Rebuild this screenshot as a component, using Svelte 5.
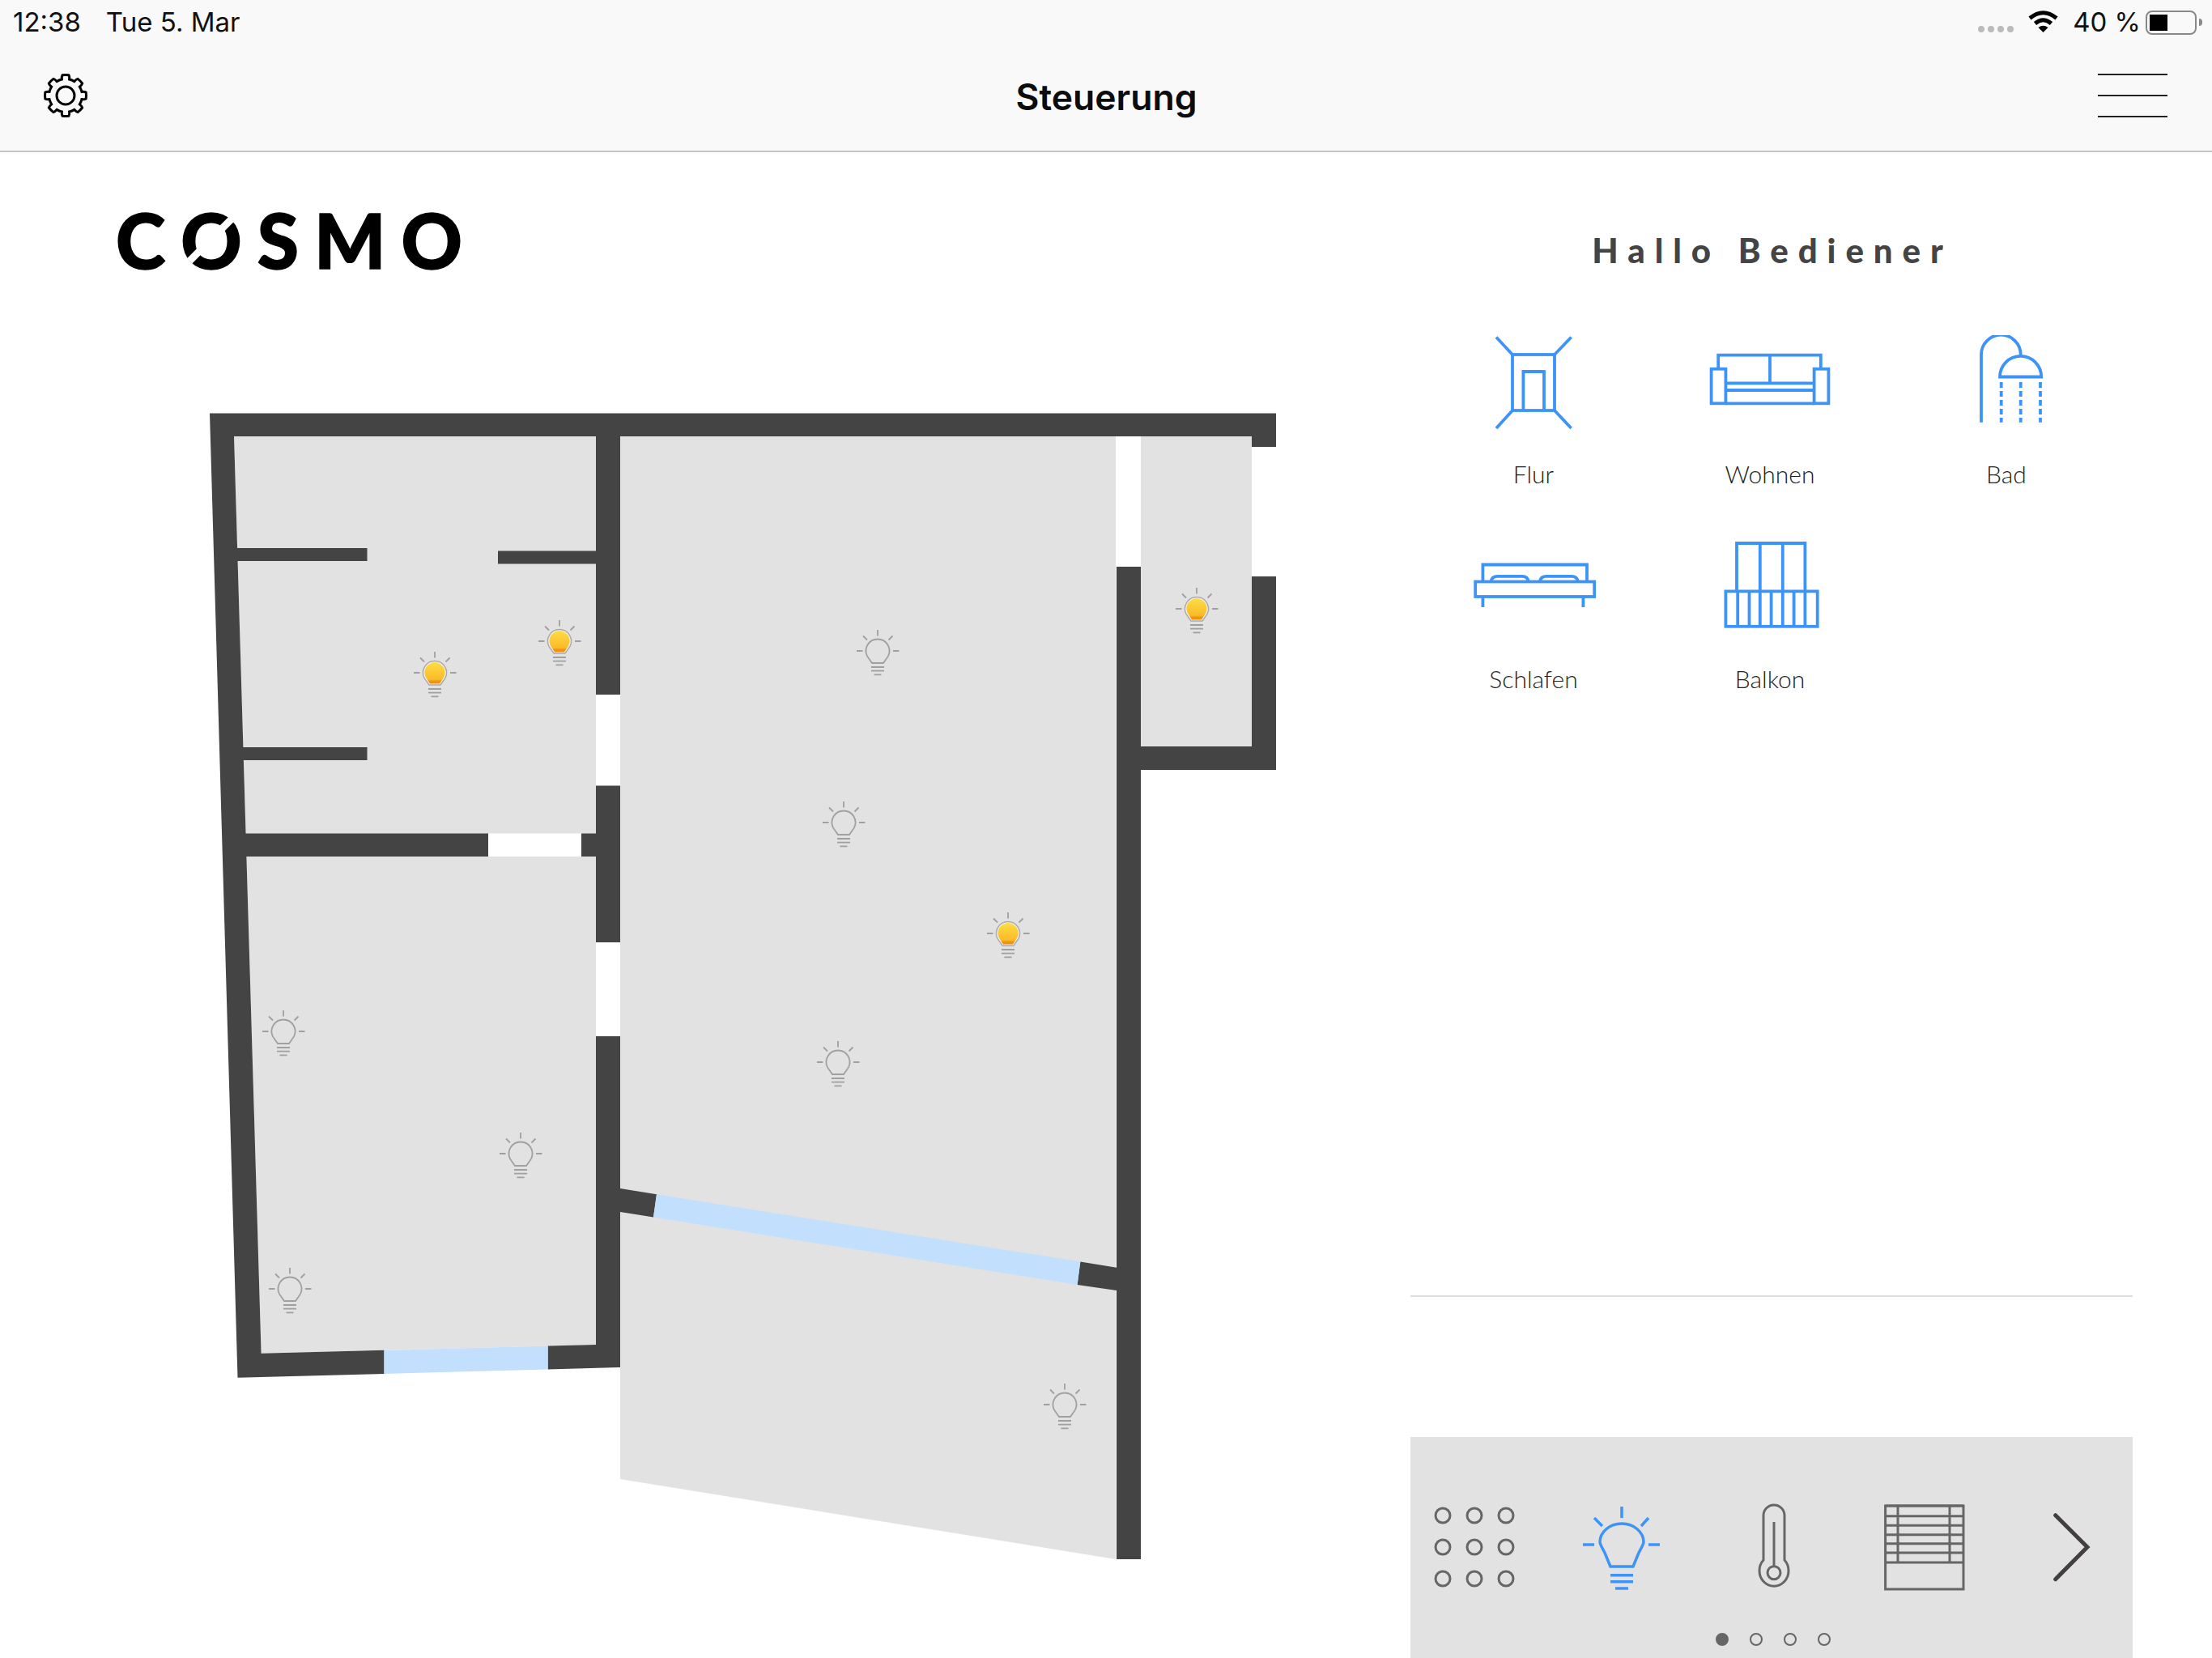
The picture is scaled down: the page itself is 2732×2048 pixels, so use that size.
<script>
	const lights = [
		{ x: 537, y: 831, on: true },
		{ x: 691, y: 792, on: true },
		{ x: 1478, y: 752, on: true },
		{ x: 1245, y: 1153, on: true },
		{ x: 1084, y: 804, on: false },
		{ x: 1042, y: 1016, on: false },
		{ x: 1035, y: 1312, on: false },
		{ x: 350, y: 1274, on: false },
		{ x: 643, y: 1425, on: false },
		{ x: 358, y: 1592, on: false },
		{ x: 1315, y: 1735, on: false }
	];

	const pt = (r, deg) => {
		const a = ((deg - 90) * Math.PI) / 180;
		return `${(r * Math.cos(a)).toFixed(2)} ${(r * Math.sin(a)).toFixed(2)}`;
	};

	// eight rounded teeth
	let gearPath = '';
	for (let i = 0; i < 8; i++) {
		const a = i * 45;
		gearPath += `${i === 0 ? 'M' : 'A20.5 20.5 0 0 1'} ${pt(20.5, a - 13)} `;
		gearPath += `Q${pt(24, a - 12)} ${pt(25.5, a - 9)} A26.5 26.5 0 0 1 ${pt(25.5, a + 9)} Q${pt(24, a + 12)} ${pt(20.5, a + 13)} `;
	}
	gearPath += 'A20.5 20.5 0 0 1 ' + pt(20.5, -13) + ' Z';

	const rooms = [
		{ name: 'Flur', icon: 'flur' },
		{ name: 'Wohnen', icon: 'wohnen' },
		{ name: 'Bad', icon: 'bad' },
		{ name: 'Schlafen', icon: 'schlafen' },
		{ name: 'Balkon', icon: 'balkon' }
	];

	const grid = [1782, 1821, 1860];
	const gridY = [1872, 1911, 1950];
	const slats = [1860, 1872.7, 1884.3, 1895.7, 1906.7, 1918, 1930];
</script>

{#snippet bulbRays()}
	<path d="M-26 0H-18.5M19 0H26.5M0 -26V-18.5M-18 -18.5L-13 -13.5M18.5 -18.5L13.5 -13.5" />
	<path d="M-8 20H8M-8 24.6H8M-4.5 29.3H4.5" />
{/snippet}

<div class="page">
	<header>
		<div class="status">
			<div class="clock"><span>12:38</span><span>Tue 5. Mar</span></div>
			<div class="system">
				<div class="signal"><i></i><i></i><i></i><i></i></div>
				<svg class="wifi" viewBox="0 0 37 27" width="37" height="27">
					<path d="M2 9.5Q18.5 -4 35 9.5" />
					<path d="M8.5 16Q18.5 7.5 28.5 16" />
					<path class="wifi-dot" d="M12.5 21Q18.5 16.5 24.5 21L18.5 27Z" />
				</svg>
				<span class="percent">40 %</span>
				<div class="battery"><div class="charge"></div></div>
				<div class="nub"></div>
			</div>
		</div>
		<nav>
			<svg class="gear" viewBox="-29 -29 58 58" width="58" height="58">
				<path d={gearPath} />
				<circle r="11" />
			</svg>
			<h1>Steuerung</h1>
			<div class="menu"><i></i><i></i><i></i></div>
		</nav>
	</header>

	<main>
		<section class="plan">
			<div class="logo">C<span class="slashed">O<i></i></span>SMO</div>
			<svg class="floor" viewBox="258 510 1320 1418" width="1320" height="1418">
				<defs>
					<linearGradient id="glow" x1="0" y1="0" x2="0" y2="1">
						<stop offset="0" stop-color="#fedd45" />
						<stop offset="0.8" stop-color="#fabb28" />
						<stop offset="0.88" stop-color="#f09510" />
						<stop offset="1" stop-color="#ee9010" />
					</linearGradient>
				</defs>

				<!-- rooms -->
				<g fill="#e2e2e2">
					<polygon points="289,539 736,539 736,1661 322.6,1671.7" />
					<polygon points="766,539 1378,539 1378,1926 766,1827" />
					<rect x="1409" y="539" width="137" height="383" />
				</g>

				<!-- walls -->
				<g fill="#444">
					<polygon points="259,510.5 1576,510.5 1576,552 1546,552 1546,539 289,539 322.6,1671.7 474.5,1667.8 474.5,1696.9 293.5,1701.7" />
					<polygon points="676.6,1662.6 736,1661 736,970.5 766,970.5 766,1689 676.6,1691.4" />
					<rect x="736" y="539" width="30" height="319" />
					<polygon points="292,677 453.5,677 453.5,693 293,693" />
					<rect x="615" y="680.5" width="121" height="16" />
					<polygon points="299,923 453.5,923 453.5,939 300,939" />
					<polygon points="302,1029.5 603,1029.5 603,1058 304,1058" />
					<rect x="718" y="1029.5" width="18" height="28.5" />
					<polygon points="766,1468 811,1475.2 807,1503.5 766,1497" />
					<polygon points="1334.3,1558.6 1379,1565.7 1379,1594 1330.6,1587" />
					<rect x="1379" y="700" width="30" height="1226" />
					<rect x="1546" y="712" width="30" height="239" />
					<rect x="1409" y="922" width="137" height="29" />
				</g>

				<!-- door gaps -->
				<rect x="603" y="1029.5" width="115" height="28.5" fill="#fff" />
				<rect x="736" y="1164" width="30" height="116" fill="#fff" />

				<!-- windows -->
				<g fill="#c2e0fe">
					<polygon points="474.5,1667.8 676.6,1662.6 676.6,1691.4 474.5,1696.9" />
					<polygon points="811,1475.2 1334.3,1558.6 1330.6,1587 807,1503.5" />
				</g>

				{#each lights as light}
					<g class="light" class:on={light.on} transform="translate({light.x} {light.y})">
						{@render bulbRays()}
						{#if light.on}
							<path class="shell" d="M-7 15H7L13 6.4A14.5 14.5 0 1 0 -13 6.4Z" />
							<path class="core" d="M-6 13.5H6L11.2 5.4A12.6 12.6 0 1 0 -11.2 5.4Z" />
						{:else}
							<path d="M-7 15H7L13 6.4A14.5 14.5 0 1 0 -13 6.4Z" />
						{/if}
					</g>
				{/each}
			</svg>
		</section>

		<aside>
			<h2>Hallo Bediener</h2>
			<div class="rooms">
				{#each rooms as room}
					<div class="room">
						<svg viewBox="-80 0 160 120" width="160" height="120">
							{#if room.icon === 'flur'}
								<rect x="-26" y="24" width="52" height="69" />
								<path d="M-12.6 93V45H13V93M-46 2.5L-26 24M46.6 2.5L26 24M-46 115L-26 93M46.6 115L26 93" />
							{:else if room.icon === 'wohnen'}
								<path d="M-63.8 41.7V24.7H62.8V41.7M0 24.7V57.9M-54.6 59.4H54.6M-54.6 68H54.6" />
								<rect x="-72.4" y="41.7" width="17.8" height="42.6" />
								<rect x="54.6" y="41.7" width="17.8" height="42.6" />
								<path d="M-54.6 84.3H54.6" />
							{:else if room.icon === 'bad'}
								<path d="M-31 107.7V24A24.3 24.3 0 0 1 17.7 24V27" />
								<path d="M-8 51.5A25.6 25.6 0 0 1 43.2 51.5Z" />
								<path class="drops" d="M-6.3 58V107.7M17.7 58V107.7M42 58V107.7" />
							{:else if room.icon === 'schlafen'}
								<path d="M-62.6 51.5V30.5H66V51.5" />
								<rect x="-71.8" y="51.5" width="147" height="18.5" />
								<path d="M-62.6 70V83M61.4 70V83" />
								<path d="M-52.4 51.5Q-52 44.8 -44 44.8H-14Q-7 44.8 -6.4 51.5M8 51.5Q8.5 44.8 16 44.8H47Q54 44.8 54.8 51.5" />
							{:else}
								<path d="M-41 63.4V4H43.4V63.4M-12.2 4V63.4M15.8 4V63.4" />
								<rect x="-54.6" y="63.4" width="113.3" height="43.4" />
								<path d="M-39.8 63.4V106.8M-25.5 63.4V106.8M-12.2 63.4V106.8M1.6 63.4V106.8M15.8 63.4V106.8M29.6 63.4V106.8M43.4 63.4V106.8" />
							{/if}
						</svg>
						<span>{room.name}</span>
					</div>
				{/each}
			</div>
			<div class="rule"></div>
			<div class="panel">
				<div class="tabs">
					<svg class="tab" viewBox="1770 1856 102 110" width="102" height="110">
						{#each gridY as y}
							{#each grid as x}
								<circle cx={x} cy={y} r="9" />
							{/each}
						{/each}
					</svg>
					<svg class="tab active" viewBox="1950 1856 106 110" width="106" height="110">
						<path d="M1955 1908H1969M2036 1908H2050M2003 1861V1875M1969 1875L1979 1885M2036 1875L2027 1885" />
						<path d="M1989 1935H2017L2024 1918Q2030 1907 2030 1905A27 23 0 0 0 1976 1905Q1976 1907 1982 1918Z" />
						<path d="M1989 1945.7H2017M1989 1953.7H2017M1995 1962H2011" />
					</svg>
					<svg class="tab" viewBox="2165 1856 52 110" width="52" height="110">
						<path d="M2178 1927V1872A13 13 0 0 1 2204 1872V1927A18 19 0 1 1 2178 1927Z" />
						<circle cx="2191" cy="1942.7" r="8" />
						<path d="M2191 1880V1935" />
					</svg>
					<svg class="tab" viewBox="2325 1856 104 110" width="104" height="110">
						<rect x="2328.6" y="1860" width="96.4" height="103" />
						{#each slats as y}
							<path d="M2328.6 {y}H2425" />
						{/each}
						<path d="M2344 1860V1930M2408 1860V1930" />
					</svg>
					<svg class="tab next" viewBox="2534 1856 48 110" width="48" height="110">
						<path d="M2538.7 1871.7L2578 1911L2538.7 1950.7" />
					</svg>
				</div>
				<div class="pager"><i class="current"></i><i></i><i></i><i></i></div>
			</div>
		</aside>
	</main>
</div>

<style>
	:global(body) {
		margin: 0;
		background: #fff;
	}

	.page {
		width: 2732px;
		height: 2048px;
		overflow: hidden;
		font-family: Inter, 'Liberation Sans', sans-serif;
	}

	header {
		height: 186px;
		background: #f9f9f9;
		border-bottom: 2px solid #c6c6c6;
	}

	.status {
		height: 50px;
		display: flex;
		justify-content: space-between;
		padding: 0 12px 0 16px;
		font-size: 33px;
		color: #111;
	}

	.clock {
		display: flex;
		gap: 31px;
		line-height: 54px;
	}

	.system {
		display: flex;
		align-items: flex-start;
	}

	.signal {
		display: flex;
		gap: 4px;
		margin-top: 32px;
	}

	.signal i {
		width: 8px;
		height: 8px;
		border-radius: 50%;
		background: #bbb;
	}

	.wifi {
		margin: 13px 18px 0 18px;
	}

	.wifi path {
		fill: none;
		stroke: #000;
		stroke-width: 5;
	}

	.wifi .wifi-dot {
		fill: #000;
		stroke: none;
	}

	.percent {
		line-height: 54px;
		margin-right: 6px;
		white-space: nowrap;
	}

	.battery {
		box-sizing: border-box;
		width: 63px;
		height: 30px;
		margin-top: 13px;
		padding: 3px;
		border: 2px solid #888;
		border-radius: 8px;
	}

	.charge {
		width: 22px;
		height: 20px;
		background: #000;
	}

	.nub {
		width: 4px;
		height: 9px;
		margin: 23px 0 0 3px;
		border-radius: 0 5px 5px 0;
		background: #888;
	}

	nav {
		height: 136px;
		display: grid;
		grid-template-columns: 1fr auto 1fr;
		align-items: center;
		padding: 0 51px 0 52px;
	}

	h1 {
		margin: 4px 0 0;
		font-size: 44.5px;
		font-weight: 600;
		color: #0c0c0c;
	}

	.gear path,
	.gear circle {
		fill: none;
		stroke: #000;
		stroke-width: 3;
	}

	.menu {
		justify-self: end;
		width: 86px;
		margin: 0 4px 0 0;
		display: flex;
		flex-direction: column;
		gap: 24px;
	}

	.menu i {
		height: 2px;
		background: #222;
	}

	main {
		height: 1860px;
		display: flex;
	}

	.plan {
		width: 1742px;
		flex: none;
	}

	.logo {
		margin: 48px 0 0 143px;
		height: 120px;
		font-family: Lato, sans-serif;
		font-size: 93px;
		line-height: 120px;
		font-weight: 900;
		letter-spacing: 19px;
		-webkit-text-stroke: 1.5px #000;
		color: #000;
	}

	.slashed {
		position: relative;
		display: inline-block;
	}

	.slashed i {
		position: absolute;
		left: 0;
		top: 55px;
		width: 76px;
		height: 9px;
		background: #fff;
		transform: rotate(-45deg);
	}

	.floor {
		display: block;
		margin: 154px 0 0 258px;
	}

	.light path {
		fill: none;
		stroke: #a0a0a0;
		stroke-width: 1.8;
	}

	.light .shell {
		fill: #f4f4f4;
		stroke: #aaa;
		stroke-width: 1.5;
	}

	.light .core {
		fill: url(#glow);
		stroke: none;
	}

	aside {
		width: 892px;
		height: 1860px;
		display: flex;
		flex-direction: column;
	}

	h2 {
		margin: 91px 0 0;
		padding-left: 2px;
		text-align: center;
		font-family: Lato, sans-serif;
		font-size: 42px;
		line-height: 60px;
		font-weight: 900;
		letter-spacing: 11.9px;
		color: #444;
	}

	.rooms {
		margin: 75px 0 0 6px;
		display: grid;
		grid-template-columns: repeat(3, 292px);
		grid-auto-rows: 253px;
	}

	.room {
		display: flex;
		flex-direction: column;
		align-items: center;
		font-family: Lato, sans-serif;
		font-size: 30px;
		font-weight: 300;
		line-height: 40px;
		color: #222;
	}

	.room span {
		margin-top: 31px;
	}

	.room svg :global(*) {
		fill: none;
		stroke: #3d94f6;
		stroke-width: 3.8;
	}

	.room svg :global(.drops) {
		stroke-dasharray: 7 4;
	}

	.rule {
		margin-top: auto;
		height: 2px;
		background: #ddd;
	}

	.panel {
		margin-top: 173px;
		height: 273px;
		flex: none;
		background: #e2e2e2;
	}

	.tabs {
		display: flex;
		padding-top: 81px;
	}

	.tab {
		flex: none;
	}

	.tab :global(*) {
		fill: none;
		stroke: #666;
		stroke-width: 3;
	}

	.tab:nth-child(1) {
		margin-left: 28px;
	}

	.tab:nth-child(2) {
		margin-left: 78px;
	}

	.tab:nth-child(3) {
		margin-left: 109px;
	}

	.tab:nth-child(4) {
		margin-left: 108px;
	}

	.tab:nth-child(5) {
		margin-left: 105px;
	}

	.tab.active :global(*) {
		stroke: #3d94f6;
		stroke-width: 3.5;
	}

	.tab.next :global(*) {
		stroke: #443f3f;
		stroke-width: 5;
		stroke-linecap: round;
	}

	.pager {
		display: flex;
		justify-content: center;
		gap: 26px;
		margin-top: 51px;
		padding-left: 3px;
	}

	.pager i {
		box-sizing: border-box;
		width: 16px;
		height: 16px;
		border: 2px solid #666;
		border-radius: 50%;
	}

	.pager .current {
		background: #666;
	}
</style>
